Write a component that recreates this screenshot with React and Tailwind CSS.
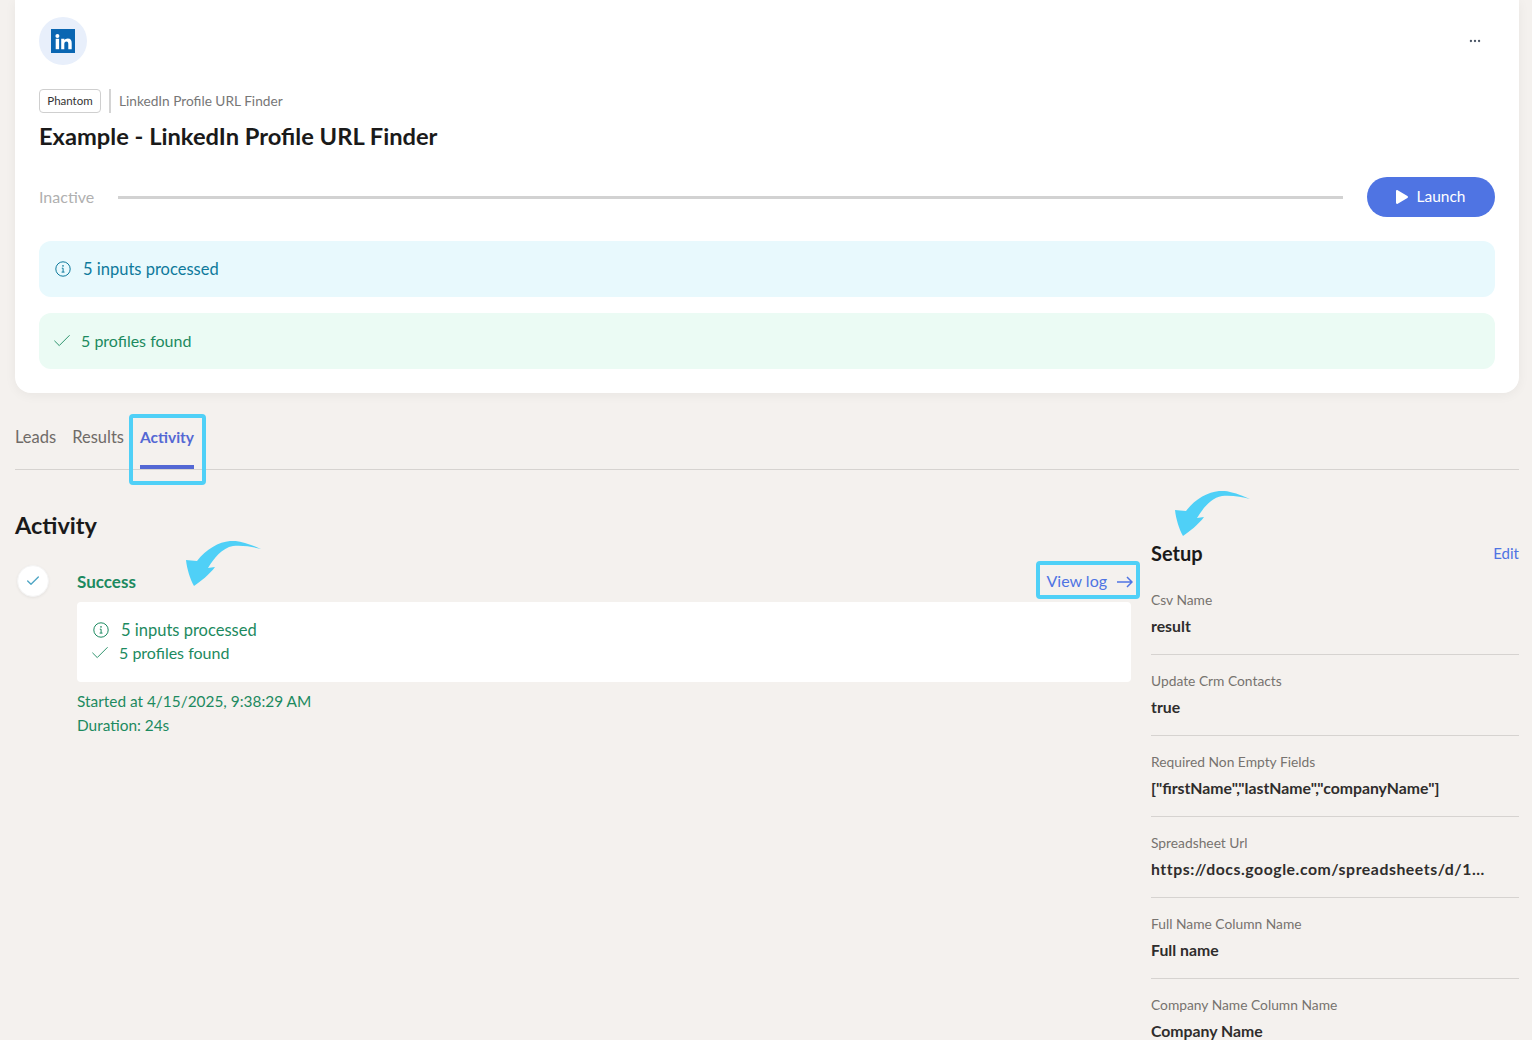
import { Check, Ellipsis } from 'lucide-react';

const setupRows = [
  { label: 'Csv Name', value: 'result' },
  { label: 'Update Crm Contacts', value: 'true' },
  { label: 'Required Non Empty Fields', value: '["firstName","lastName","companyName"]' },
  { label: 'Spreadsheet Url', value: 'https://docs.google.com/spreadsheets/d/1...', spaced: true },
  { label: 'Full Name Column Name', value: 'Full name' },
  { label: 'Company Name Column Name', value: 'Company Name' },
];

function InfoIcon({ className }) {
  return (
    <svg viewBox="0 0 16 16" fill="none" stroke="currentColor" className={className}>
      <circle cx="8" cy="8" r="7.2" strokeWidth="1" />
      <circle cx="8" cy="4.9" r="0.8" fill="currentColor" stroke="none" />
      <path d="M6.8 7.2H8.1V11M6.6 11.1H9.5" strokeWidth="1" />
    </svg>
  );
}

function LinkedinLogo() {
  return (
    <svg viewBox="0 0 24 24" className="h-6 w-6">
      <rect width="24" height="24" fill="#0a66b2" />
      <circle cx="6.4" cy="6.9" r="2" fill="#fff" />
      <rect x="4.7" y="9.8" width="3.4" height="10.4" fill="#fff" />
      <path
        d="M10.2 9.8h3.2v1.5c.6-1 1.8-1.8 3.3-1.8 3 0 4 1.9 4 4.8v5.9h-3.4V15c0-1.400-.4-2.600-1.800-2.600-1.500 0-2.200 1.100-2.200 2.700v5.100h-3.100z"
        fill="#fff"
      />
    </svg>
  );
}

function HandArrow({ className }) {
  return (
    <svg viewBox="0 0 76 46" className={className}>
      <path
        d="M75 8C62 2 50-1 44 0 33 1 20 8 11 20c-4 0-8-1-11-1 1 9 4 19 8 26 6-4 16-12 21-19l-7 1C28 17 36 7 47 5c10-1 20 1 28 3z"
        fill="#4fd0f7"
      />
    </svg>
  );
}

export default function App() {
  return (
    <div className="relative h-[1040px] overflow-hidden bg-[#f4f1ee] pl-[15px] pr-[13px] font-['Lato',sans-serif]">
      {/* Top card */}
      <div className="rounded-b-2xl bg-white px-6 pb-6 pt-[17px] shadow-[0_2px_12px_rgba(0,0,0,0.05)]">
        <div className="flex items-start justify-between">
          <div className="flex h-12 w-12 items-center justify-center rounded-full bg-[#e8effb]">
            <LinkedinLogo />
          </div>
          <Ellipsis size={14} className="mr-[13px] mt-[17px] text-gray-600" />
        </div>

        <div className="mt-6 flex h-6 items-center">
          <span className="flex h-6 w-[62px] items-center justify-center rounded border border-[#cfcfcf] text-[11.5px] text-[#333]">
            Phantom
          </span>
          <span className="ml-2 h-6 w-0.5 bg-[#d4d4d4]" />
          <span className="ml-2 text-[13.7px] text-[#777]">LinkedIn Profile URL Finder</span>
        </div>
        <h1 className="mt-[7px] text-[23.7px] font-bold leading-8 text-[#1a1a1a]">
          Example - LinkedIn Profile URL Finder
        </h1>

        <div className="mt-[25px] flex items-center">
          <span className="-mt-px text-base text-[#b0b0b0]">Inactive</span>
          <div className="ml-6 h-[3px] flex-1 bg-[#d2d2d2]" />
          <button className="ml-6 flex h-10 w-32 items-center justify-center gap-2 rounded-full bg-[#4f74e3] text-[15.500px] text-white">
            <svg viewBox="0 0 12 14" className="h-[14px] w-3" fill="#fff">
              <path d="M0 1.200C0 .3.900-.2 1.700.3l9.700 5.800c.8.4.8 1.400 0 1.800l-9.700 5.800C.9 14.200 0 13.700 0 12.800z" />
            </svg>
            <span className="-mt-px">Launch</span>
          </button>
        </div>

        <div className="mt-6 flex h-14 items-center gap-3 rounded-xl bg-[#e8f9fd] px-4 text-[16.500px] text-[#0e7a9c]">
          <InfoIcon className="h-4 w-4" />
          5 inputs processed
        </div>
        <div className="mt-4 flex h-14 items-center gap-2 rounded-xl bg-[#ebfbf4] px-4 text-base text-[#1c8a60]">
          <Check size={22} strokeWidth={1} className="-ml-1" />
          <span className="-mt-px">5 profiles found</span>
        </div>
      </div>

      {/* Tabs */}
      <div className="relative mt-6 flex h-[53px] gap-4 border-b border-[#d6d3d0] text-[16.500px]">
        <span className="leading-10 text-[#6f6b68]">Leads</span>
        <span className="leading-10 text-[#6f6b68]">Results</span>
        <span className="h-[52px] border-b-4 border-[#5468d4] text-[15.500px] font-bold leading-10 text-[#5468d4]">Activity</span>
        <div className="absolute left-[114px] top-[-3px] h-[71px] w-[77px] rounded-sm border-4 border-[#4fd0f7]" />
      </div>

      <div className="flex gap-5">
        {/* Activity column */}
        <div className="w-[1116px]">
          <h2 className="mt-[39px] text-[23.5px] font-bold leading-8 text-[#1a1a1a]">Activity</h2>
          <div className="mt-[21px] flex">
            <div className="w-[62px]">
              <div className="ml-0.5 mt-[3px] flex h-8 w-8 items-center justify-center rounded-full border border-[#f4f4f4] bg-white shadow-[0_1px_3px_rgba(0,0,0,0.06)]">
                <Check size={16} className="text-[#4ea5c4]" />
              </div>
            </div>
            <div className="flex-1">
              <div className="flex h-10 items-center justify-between">
                <span className="text-[17px] font-bold text-[#1c8a60]">Success</span>
                <div className="relative -mr-0.5 flex items-center gap-[10px] text-base text-[#4f74e3]">
                  <span className="-mt-[3px]">View log</span>
                  <svg viewBox="0 0 16 12" fill="none" stroke="currentColor" strokeWidth="1.5" className="h-3 w-4">
                    <path d="M0 6H15M10 1l5 5-5 5" />
                  </svg>
                  <div className="absolute -bottom-[6px] -left-[10px] -right-[7px] -top-[11px] rounded-sm border-4 border-[#4fd0f7]" />
                </div>
              </div>
              <div className="rounded bg-white px-4 pb-[18px] pt-4 text-base leading-6 text-[#1c8a60]">
                <div className="flex items-center gap-3 text-[16.500px]">
                  <InfoIcon className="h-4 w-4" />
                  5 inputs processed
                </div>
                <div className="flex h-[22px] items-center gap-2">
                  <Check size={22} strokeWidth={1} className="-ml-1" />
                  5 profiles found
                </div>
              </div>
              <p className="mt-[7px] text-[15.400px] leading-6 text-[#1c8a60]">Started at 4/15/2025, 9:38:29 AM</p>
              <p className="text-[15.400px] leading-6 text-[#1c8a60]">Duration: 24s</p>
            </div>
          </div>
        </div>

        {/* Setup column */}
        <div className="flex-1 pt-[69px]">
          <div className="mb-[7px] flex h-7 items-center justify-between">
            <h3 className="text-xl font-bold text-[#1a1a1a]">Setup</h3>
            <span className="text-[15px] text-[#4f74e3]">Edit</span>
          </div>
          {setupRows.map((row) => (
            <div key={row.label} className="border-b border-[#d6d3d0] pb-4 pt-4">
              <p className="text-[13.800px] leading-5 text-[#77736f]">{row.label}</p>
              <p className={`mt-1 text-[15.800px] font-bold leading-6 text-[#2f2d2c] ${row.spaced ? 'tracking-[0.55px]' : ''}`}>
                {row.value}
              </p>
            </div>
          ))}
        </div>
      </div>

      <HandArrow className="absolute left-[186px] top-[541px] h-[46px] w-[76px]" />
      <HandArrow className="absolute left-[1175px] top-[491px] h-[46px] w-[76px]" />
    </div>
  );
}
